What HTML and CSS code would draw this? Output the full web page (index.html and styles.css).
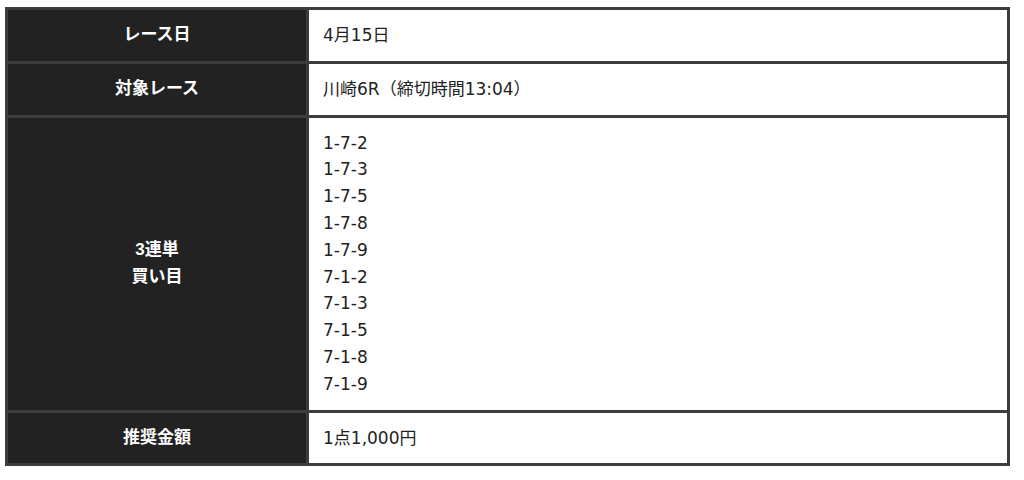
FILE: index.html
```html
<!DOCTYPE html>
<html lang="ja">
<head>
<meta charset="utf-8">
<link rel="stylesheet" href="styles.css">
</head>
<body>
<table class="info">
  <tr>
    <th class="label">レース日</th>
    <td class="value">4月15日</td>
  </tr>
  <tr>
    <th class="label">対象レース</th>
    <td class="value">川崎6R（締切時間13:04）</td>
  </tr>
  <tr>
    <th class="label">3連単<br>買い目</th>
    <td class="value">1-7-2<br>1-7-3<br>1-7-5<br>1-7-8<br>1-7-9<br>7-1-2<br>7-1-3<br>7-1-5<br>7-1-8<br>7-1-9</td>
  </tr>
  <tr>
    <th class="label">推奨金額</th>
    <td class="value">1点1,000円</td>
  </tr>
</table>
</body>
</html>
```
FILE: styles.css
```css
html, body {
  margin: 0;
  padding: 0;
  background: #ffffff;
}
body {
  font-family: "DejaVu Sans", "Noto Sans CJK JP", sans-serif;
  font-size: 17px;
}
.info {
  border-collapse: collapse;
  width: 1005px;
  margin: 7px 0 0 5px;
  border: 3px solid #3d3d3d;
}
.info th,
.info td {
  border: 3px solid #3d3d3d;
  padding: 12px 14px;
  line-height: 26.8px;
}
.label {
  width: 270px;
  background: #222222;
  color: #ffffff;
  font-family: "Liberation Sans", "Noto Sans CJK JP", sans-serif;
  font-weight: bold;
  text-align: center;
  vertical-align: middle;
}
.value {
  background: #ffffff;
  color: #222222;
  text-align: left;
  vertical-align: top;
}
```
